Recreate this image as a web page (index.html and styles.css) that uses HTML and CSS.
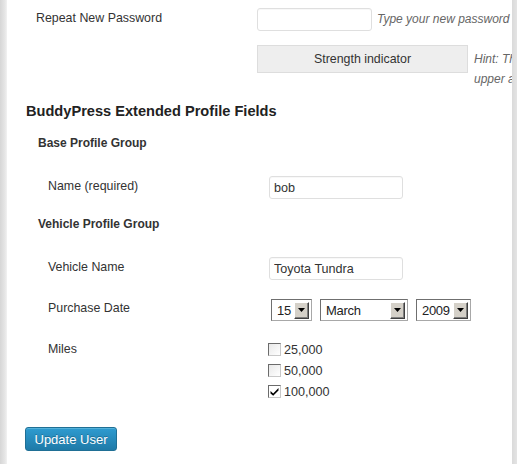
FILE: index.html
```html
<!DOCTYPE html>
<html>
<head>
<meta charset="utf-8">
<link rel="stylesheet" href="styles.css">
</head>
<body>
<div class="page">
  <div class="edge-left"></div>
  <main class="main">
    <div class="row row-pw">
      <label class="pw-label">Repeat New Password</label>
      <input class="text pw-input" type="password">
      <span class="desc">Type your new password again.</span>
    </div>
    <div class="row row-strength">
      <div class="pw-spacer"></div>
      <div class="strength">Strength indicator</div>
      <div class="hint">Hint: The password should be at least seven characters long.<br>upper and lower case letters, numbers and symbols</div>
    </div>

    <section class="profile">
      <h2 class="section-title">BuddyPress Extended Profile Fields</h2>

      <h3 class="group-title">Base Profile Group</h3>
      <div class="frow">
        <label class="flabel">Name (required)</label>
        <input class="text finput" type="text" value="bob">
      </div>

      <h3 class="group-title group-vehicle">Vehicle Profile Group</h3>
      <div class="frow">
        <label class="flabel">Vehicle Name</label>
        <input class="text finput" type="text" value="Toyota Tundra">
      </div>
      <div class="frow frow-date">
        <label class="flabel">Purchase Date</label>
        <div class="selects">
          <div class="select sel-day"><span class="sel-val">15</span><span class="sel-btn"><svg width="7" height="4" viewBox="0 0 7 4"><path d="M0 0h7L3.5 4z" fill="#000"/></svg></span></div>
          <div class="select sel-month"><span class="sel-val">March</span><span class="sel-btn"><svg width="7" height="4" viewBox="0 0 7 4"><path d="M0 0h7L3.5 4z" fill="#000"/></svg></span></div>
          <div class="select sel-year"><span class="sel-val">2009</span><span class="sel-btn"><svg width="7" height="4" viewBox="0 0 7 4"><path d="M0 0h7L3.5 4z" fill="#000"/></svg></span></div>
        </div>
      </div>
      <div class="frow frow-miles">
        <label class="flabel">Miles</label>
        <div class="checks">
          <div class="check"><span class="box"></span><span>25,000</span></div>
          <div class="check"><span class="box"></span><span>50,000</span></div>
          <div class="check"><span class="box checked"><svg width="9" height="9" viewBox="0 0 9 9"><path d="M0.5 4 L3.2 6.4 L8.5 1 L8.5 3.6 L3.2 8.8 L0.5 6.4 Z" fill="#000"/></svg></span><span>100,000</span></div>
        </div>
      </div>
    </section>

    <div class="actions">
      <button class="btn-primary" type="button">Update User</button>
    </div>
  </main>
  <div class="edge-right"></div>
</div>
</body>
</html>
```

FILE: styles.css
```css
html, body {
  margin: 0;
  padding: 0;
  background: #fff;
}
body {
  font-family: "Liberation Sans", Arial, sans-serif;
  font-size: 12.4px;
  color: #333;
}
.page {
  display: flex;
  height: 464px;
  overflow: hidden;
}
.edge-left {
  width: 7px;
  flex: none;
  background: linear-gradient(to right, #d6d6d6, #e6e6e6 70%, #f2f2f2);
}
.edge-right {
  width: 5px;
  flex: none;
  background: linear-gradient(to right, #dadada, #e4e4e4);
}
.main {
  flex: 1;
  min-width: 0;
  overflow: hidden;
}
.row {
  display: flex;
  align-items: flex-start;
  padding-left: 29px;
  white-space: nowrap;
}
.row-pw {
  margin-top: 8px;
}
.pw-label {
  width: 221px;
  flex: none;
  padding-top: 2px;
  line-height: 16px;
}
.pw-spacer {
  width: 221px;
  flex: none;
}
.text {
  box-sizing: border-box;
  height: 23px;
  border: 1px solid #dfdfdf;
  border-radius: 3px;
  background: #fff;
  font-family: "Liberation Sans", Arial, sans-serif;
  font-size: 12.6px;
  color: #333;
  padding: 0 4px;
  margin: 0;
  box-shadow: inset 0 1px 1px rgba(0,0,0,0.03);
  outline: none;
}
.pw-input {
  width: 115px;
  flex: none;
}
.desc {
  font-style: italic;
  font-size: 12px;
  color: #666;
  margin-left: 5px;
  padding-top: 3px;
  line-height: 16px;
}
.row-strength {
  margin-top: 14px;
}
.strength {
  box-sizing: border-box;
  width: 211px;
  height: 28px;
  flex: none;
  background: #eee;
  border: 1px solid #ddd;
  text-align: center;
  line-height: 26px;
}
.hint {
  font-style: italic;
  font-size: 12px;
  color: #666;
  margin-left: 6px;
  margin-top: 4px;
  line-height: 20px;
}
.profile {
  padding-left: 19px;
}
.section-title {
  margin: 14px 0 0;
  font-size: 14.6px;
  line-height: 17px;
  font-weight: bold;
  color: #222;
}
.group-title {
  margin: 15px 0 0 12px;
  font-size: 12px;
  line-height: 16px;
  font-weight: bold;
  color: #333;
}
.group-vehicle {
  margin-top: 17px;
}
.frow {
  display: flex;
  align-items: flex-start;
  padding-left: 22px;
  margin-top: 25px;
}
.flabel {
  width: 221px;
  flex: none;
  padding-top: 2px;
  line-height: 16px;
}
.finput {
  width: 134px;
}
.frow-date {
  margin-top: 19px;
}
.frow-date .flabel {
  padding-top: 1px;
}
.selects {
  display: flex;
  gap: 8px;
  margin-left: 2px;
}
.select {
  box-sizing: border-box;
  height: 22px;
  display: flex;
  align-items: center;
  border: 1px solid #6f6f6f;
  border-right-color: #a8a8a8;
  border-bottom-color: #a8a8a8;
  background: #fff;
  padding: 1px 2px 1px 0;
  font-size: 13px;
  letter-spacing: -0.3px;
  color: #222;
}
.sel-val {
  flex: 1;
  padding-left: 5px;
}
.sel-btn {
  box-sizing: border-box;
  width: 15px;
  height: 17px;
  display: flex;
  align-items: center;
  justify-content: center;
  background: #d4d0c8;
  border: 1px solid;
  border-color: #fff #404040 #404040 #fff;
  box-shadow: inset -1px -1px 0 #808080;
}
.sel-day { width: 41px; }
.sel-month { width: 88px; }
.sel-year { width: 55px; }
.frow-miles {
  margin-top: 18px;
}
.checks {
  display: flex;
  flex-direction: column;
  gap: 8px;
  padding-top: 4px;
  margin-left: -1px;
}
.check {
  display: flex;
  align-items: center;
  gap: 3px;
  height: 13px;
  font-size: 12.6px;
  color: #333;
}
.box {
  box-sizing: border-box;
  width: 13px;
  height: 13px;
  border: 1px solid #6b6b6b;
  border-right-color: #c8c8c8;
  border-bottom-color: #c8c8c8;
  background: linear-gradient(135deg, #e8e8e8, #fff);
  display: flex;
  align-items: center;
  justify-content: center;
}
.box.checked {
  background: #fff;
}
.actions {
  padding-left: 18px;
  margin-top: 29px;
}
.btn-primary {
  box-sizing: border-box;
  width: 92px;
  height: 24px;
  border: 1px solid #1f6f95;
  border-radius: 3px;
  background: linear-gradient(#2e9bd0, #1f7aa8);
  color: #fff;
  font-family: "Liberation Sans", Arial, sans-serif;
  font-size: 13px;
  padding: 0;
  text-shadow: 0 -1px 0 rgba(0,0,0,0.25);
  box-shadow: inset 0 1px 0 rgba(120,200,230,0.5);
}
```
